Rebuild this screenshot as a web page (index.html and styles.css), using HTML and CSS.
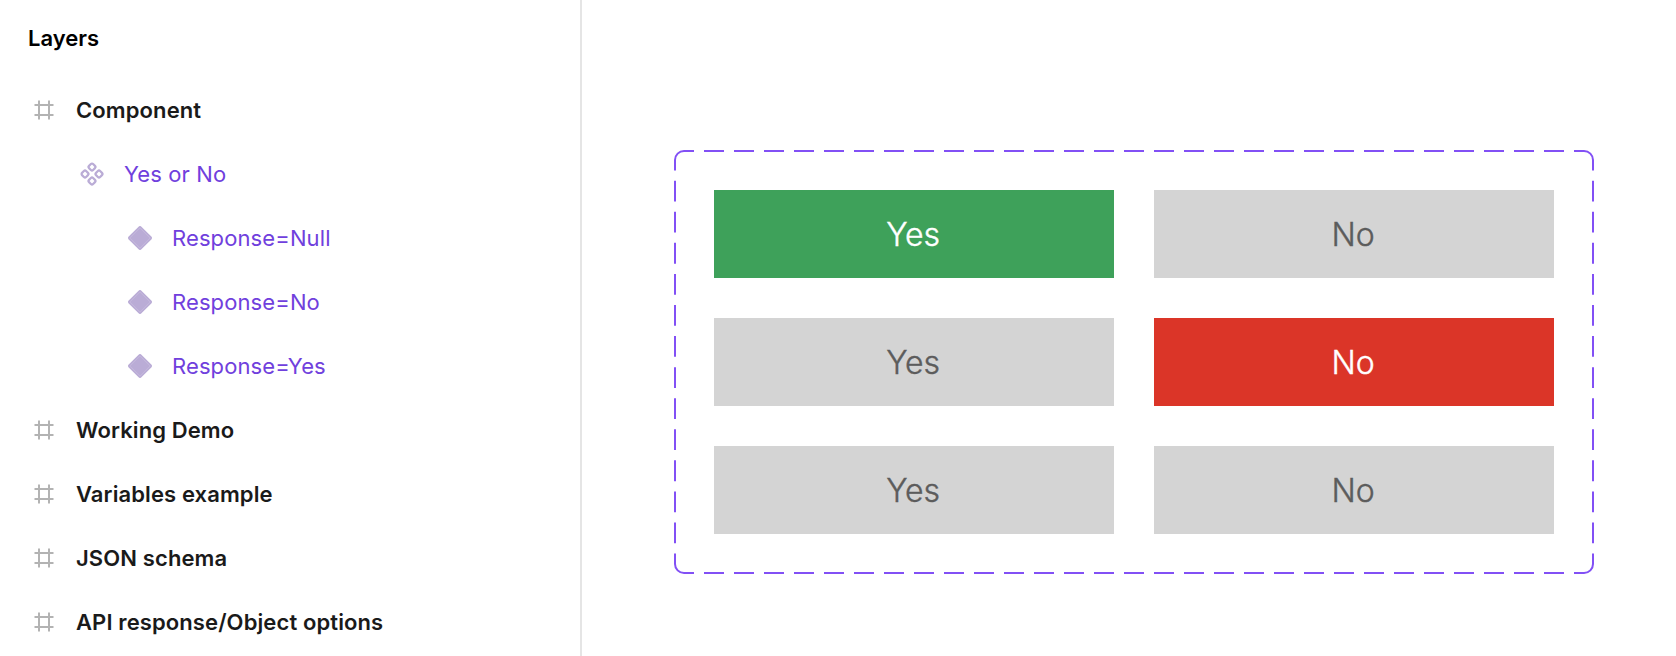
FILE: index.html
```html
<!DOCTYPE html>
<html lang="en">
<head>
<meta charset="utf-8">
<title>Layers</title>
<link rel="stylesheet" href="styles.css">
</head>
<body>
<svg class="defs" aria-hidden="true">
  <symbol id="frame" viewBox="0 0 24 24"><path d="M7 2.500v19M17 2.500v19M2.500 7h19M2.500 17h19" fill="none" stroke="currentColor" stroke-width="2"/></symbol>
  <symbol id="set" viewBox="0 0 24 24"><g fill="none" stroke="currentColor" stroke-width="2.200"><rect x="9.100" y="2.100" width="5.800" height="5.800" rx="1.600" transform="rotate(45 12 5)"/><rect x="9.100" y="16.100" width="5.800" height="5.800" rx="1.600" transform="rotate(45 12 19)"/><rect x="2.100" y="9.100" width="5.800" height="5.800" rx="1.600" transform="rotate(45 5 12)"/><rect x="16.100" y="9.100" width="5.800" height="5.800" rx="1.600" transform="rotate(45 19 12)"/></g></symbol>
  <symbol id="variant" viewBox="0 0 24 24"><rect x="3" y="3" width="18" height="18" rx="2" transform="rotate(45 12 12)" fill="currentColor"/><rect x="4.800" y="4.800" width="14.400" height="14.400" rx=".5" transform="rotate(45 12 12)" fill="none" stroke="#fff" stroke-opacity=".3" stroke-width=".5"/></symbol>
</svg>
<div class="app">
  <aside class="sidebar">
    <h1 class="title">Layers</h1>
    <ul class="layers">
      <li class="layer"><svg class="icon"><use href="#frame"/></svg><span>Component</span></li>
      <li class="layer component level-1"><svg class="icon"><use href="#set"/></svg><span>Yes or No</span></li>
      <li class="layer component level-2"><svg class="icon"><use href="#variant"/></svg><span>Response=Null</span></li>
      <li class="layer component level-2"><svg class="icon"><use href="#variant"/></svg><span>Response=No</span></li>
      <li class="layer component level-2"><svg class="icon"><use href="#variant"/></svg><span>Response=Yes</span></li>
      <li class="layer"><svg class="icon"><use href="#frame"/></svg><span>Working Demo</span></li>
      <li class="layer"><svg class="icon"><use href="#frame"/></svg><span>Variables example</span></li>
      <li class="layer"><svg class="icon"><use href="#frame"/></svg><span>JSON schema</span></li>
      <li class="layer"><svg class="icon"><use href="#frame"/></svg><span>API response/Object options</span></li>
    </ul>
  </aside>
  <main class="canvas">
    <div class="component-set">
      <svg class="outline" viewBox="0 0 920 424">
        <g fill="none" stroke="#8250f5" stroke-width="2">
          <path d="M10 1H910M10 423H910" stroke-dasharray="20 10" stroke-dashoffset="10"/>
          <path d="M1 10V414M919 10V414" stroke-dasharray="20.800 10.270" stroke-dashoffset="10.350"/>
          <path d="M1 10a9 9 0 0 1 9-9M910 1a9 9 0 0 1 9 9M919 414a9 9 0 0 1-9 9M10 423a9 9 0 0 1-9-9"/>
        </g>
      </svg>
      <div class="variants">
        <div class="option yes">Yes</div><div class="option">No</div>
        <div class="option">Yes</div><div class="option no">No</div>
        <div class="option">Yes</div><div class="option">No</div>
      </div>
    </div>
  </main>
</div>
</body>
</html>
```

FILE: styles.css
```css
* { box-sizing: border-box; }
body { margin: 0; background: #fff; font-family: Inter, "Liberation Sans", sans-serif; }
.defs { display: none; }
.app { display: flex; height: 656px; overflow: hidden; }
.sidebar { width: 582px; border-right: 2px solid #e5e5e5; }
.title { margin: 0; padding: 6px 28px 0; height: 78px; font-size: 22px; line-height: 64px; font-weight: 600; color: #000; }
.layers { margin: 0; padding: 0; list-style: none; }
.layer { display: flex; align-items: center; gap: 20px; height: 64px; padding-left: 32px; font-size: 22px; font-weight: 600; letter-spacing: 0.11px; color: #1a1a1a; white-space: nowrap; }
.icon { width: 24px; height: 24px; color: #b3b3b3; }
.component { font-weight: 400; color: #7040dd; letter-spacing: 0.11px; }
.component .icon { color: #baacd6; }
.level-1 { padding-left: 80px; }
.level-2 { padding-left: 128px; }
.canvas { flex: 1; padding: 150px 0 0 92px; }
.component-set { display: grid; width: 920px; height: 424px; }
.outline, .variants { grid-area: 1 / 1; }
.outline { width: 920px; height: 424px; }
.variants { display: grid; grid-template-columns: 400px 400px; grid-auto-rows: 88px; gap: 40px; padding: 40px; }
.option { display: flex; align-items: center; justify-content: center; padding: 1px 2px 0 0; background: #d4d4d4; color: #5c5c5c; font-size: 32px; font-weight: 300; letter-spacing: -0.1px; -webkit-text-stroke: 0.4px currentColor; }
.yes { background: #3ea15a; color: #fff; }
.no { background: #db3528; color: #fff; }
```
